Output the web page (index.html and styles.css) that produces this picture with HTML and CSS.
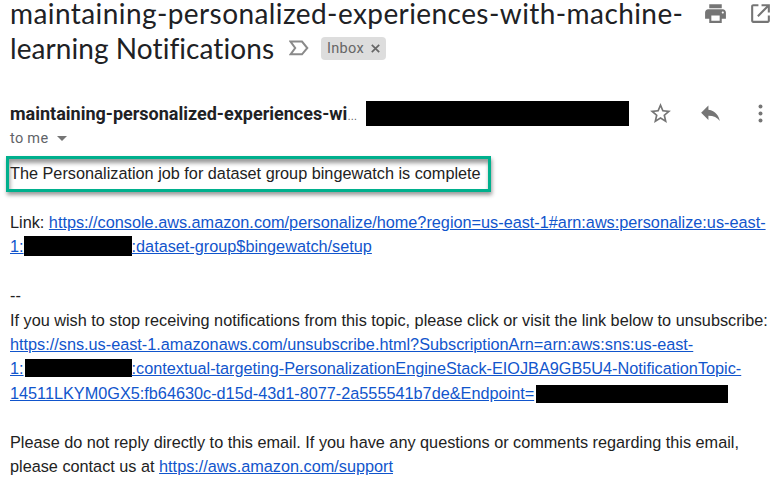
FILE: index.html
```
<!DOCTYPE html>
<html lang="en">
<head>
<meta charset="utf-8">
<title>Notifications</title>
<link rel="stylesheet" href="styles.css">
</head>
<body>
<header class="subject">
  <div class="heading">
    <h1 class="title">maintaining-personalized-experiences-with-machine-</h1>
    <div class="second">
      <span class="title tail">learning Notifications</span>
      <svg width="20" height="16" viewBox="0 0 20 16"><path d="M1.500 1.500h11.500L18.300 8l-5.300 6.300H1.500L6.200 8z" fill="none" stroke="#8a8a8a" stroke-width="2"/></svg>
      <span class="chip">Inbox <svg width="9" height="9" viewBox="0 0 9 9"><path d="M.8.8l7.400 7.400M8.200.8L.8 8.200" stroke="#666" stroke-width="1.700"/></svg></span>
    </div>
  </div>
  <div class="actions">
    <svg width="25" height="25" viewBox="0 0 24 24"><path fill="#757575" d="M19 8H5c-1.660 0-3 1.340-3 3v6h4v4h12v-4h4v-6c0-1.660-1.340-3-3-3zm-3 11H8v-5h8v5zm3-7c-.55 0-1-.45-1-1s.45-1 1-1 1 .45 1 1-.45 1-1 1zm-1-9H6v4h12V3z"/></svg>
    <svg width="25" height="25" viewBox="0 0 24 24"><path fill="#757575" d="M19 19H5V5h5V3H5c-1.110 0-2 .9-2 2v14c0 1.100.89 2 2 2h14c1.100 0 2-.9 2-2v-5h-2v5zM13 3v2h4.590l-8.830 8.830 1.410 1.410L19 6.410V11h2V3h-8z"/></svg>
  </div>
</header>
<section class="sender">
  <div class="from"><b class="name">maintaining-personalized-experiences-wi</b><span class="dots">…</span></div>
  <span class="mask address"></span>
  <div class="tools">
    <svg width="25" height="25" viewBox="0 0 24 24"><path fill="#757575" d="M22 9.240l-7.190-.62L12 2 9.190 8.630 2 9.240l5.460 4.730L5.820 21 12 17.270 18.180 21l-1.630-7.030L22 9.240zM12 15.400l-3.760 2.270 1-4.280-3.320-2.880 4.380-.38L12 6.100l1.710 4.040 4.380.38-3.320 2.880 1 4.280L12 15.400z"/></svg>
    <svg width="25" height="25" viewBox="0 0 24 24"><path fill="#757575" d="M10 9V5l-7 7 7 7v-4.100c5 0 8.500 1.600 11 5.100-1-5-4-10-11-11z" transform="translate(0 -.7)"/></svg>
    <svg width="25" height="25" viewBox="0 0 24 24"><g fill="#757575"><circle cx="12" cy="5.300" r="1.900"/><circle cx="12" cy="12" r="1.900"/><circle cx="12" cy="18.700" r="1.900"/></g></svg>
  </div>
</section>
<div class="to">to me<i class="caret"></i></div>
<main class="message">
  <p class="highlight">The Personalization job for dataset group bingewatch is complete</p>
  <p class="row">Link: <a href="#">https://console.aws.amazon.com/personalize/home?region=us-east-1#arn:aws:personalize:us-east-</a></p>
  <p class="row"><a href="#">1:<span class="mask account"></span>:dataset-group$bingewatch/setup</a></p>
  <p class="row gap">--</p>
  <p class="row">If you wish to stop receiving notifications from this topic, please click or visit the link below to unsubscribe:</p>
  <p class="row"><a href="#">https://sns.us-east-1.amazonaws.com/unsubscribe.html?SubscriptionArn=arn:aws:sns:us-east-</a></p>
  <p class="row"><a href="#">1:<span class="mask account short"></span>:contextual-targeting-PersonalizationEngineStack-EIOJBA9GB5U4-NotificationTopic-</a></p>
  <p class="row"><a href="#">14511LKYM0GX5:fb64630c-d15d-43d1-8077-2a555541b7de&amp;Endpoint=</a><span class="mask endpoint"></span></p>
  <p class="row gap">Please do not reply directly to this email. If you have any questions or comments regarding this email,</p>
  <p class="row">please contact us at <a href="#">https://aws.amazon.com/support</a></p>
</main>
</body>
</html>
```
FILE: styles.css
```
* { box-sizing: border-box; }
body { margin: 0; width: 780px; height: 484px; overflow: hidden; background: #fff; color: #222; font-family: "Liberation Sans", Arial, sans-serif; }
p, h1 { margin: 0; }
svg { display: block; }
.subject { display: flex; height: 98px; padding-left: 10px; }
.heading { width: 693px; }
.title { font: 400 28px/32px Lato, sans-serif; white-space: nowrap; color: #202124; letter-spacing: .42px; }
h1.title { height: 32px; line-height: 27px; }
.second { display: flex; align-items: center; height: 32px; }
.tail { width: 279px; letter-spacing: .07px; }
.chip { display: flex; align-items: center; gap: 7px; width: 65px; height: 23px; margin-left: 12px; padding-left: 6px; border-radius: 4px; background: #ddd; color: #666; font: 14.500px Roboto, sans-serif; letter-spacing: .3px; }
.actions { display: flex; gap: 20px; padding-top: 1px; }
.sender { display: flex; align-items: center; height: 30px; padding-left: 10px; }
.from { display: flex; align-items: baseline; width: 356px; }
.name { font: 700 18px Roboto, sans-serif; white-space: nowrap; color: #202124; }
.dots { font-size: 10px; color: #555; }
.mask { display: inline-block; background: #000; }
.address { width: 263px; height: 25px; }
.tools { display: flex; gap: 25px; padding-left: 19px; }
.to { display: flex; align-items: center; height: 21px; padding-left: 10px; font: 14.500px Roboto, sans-serif; color: #5f6368; letter-spacing: .3px; }
.caret { margin-left: 9px; border: 5px solid transparent; border-top-color: #757575; border-bottom: 0; }
.message { font-size: 16.250px; line-height: 24.400px; white-space: nowrap; }
.highlight { width: 485px; height: 36px; margin: 7px 0 18px 6px; padding-left: 1px; border: 3px solid #00b08d; line-height: 29px; box-shadow: 1px 3px 4px #0006, inset 1px 4px 4px #0006; }
.row { height: 24.400px; padding-left: 10px; }
.row.gap { margin-top: 24.400px; }
a { color: #15c; text-decoration: underline; }
.account { width: 108px; height: 20px; vertical-align: -4px; }
.short { width: 107px; height: 18px; margin-left: 1px; vertical-align: -3px; }
.endpoint { width: 192px; height: 18px; margin-left: 2px; vertical-align: -4px; }
```
